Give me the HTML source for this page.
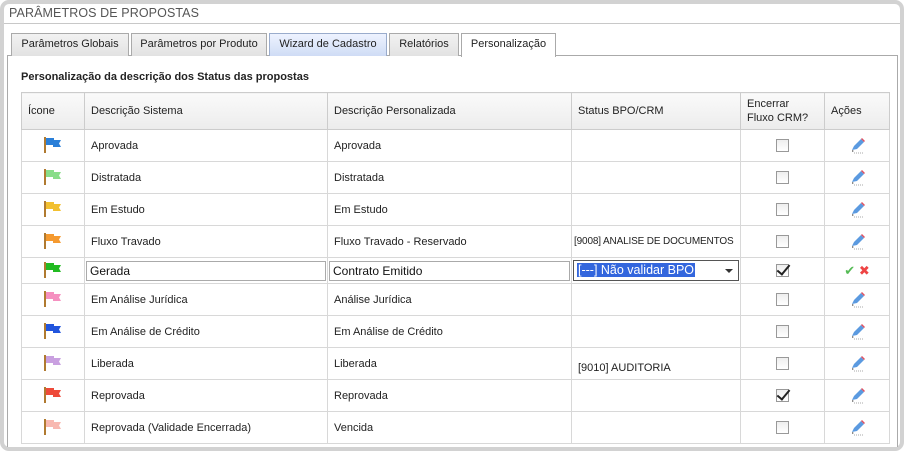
<!DOCTYPE html>
<html><head><meta charset="utf-8"><style>
*{box-sizing:border-box;margin:0;padding:0}
body{width:904px;height:451px;background:#fff;font-family:"Liberation Sans","DejaVu Sans",sans-serif;font-size:11px;color:#222;position:relative;overflow:hidden}
.frame{position:absolute;left:0;top:0;width:904px;height:451px;border:4px solid #d2d2d2;border-radius:9px;background:#fff}
.title{position:absolute;left:9px;top:6px;font-size:12.5px;color:#555;letter-spacing:.1px}
.tline{position:absolute;left:4px;right:4px;top:23px;border-top:1px solid #c8c8c8}
.tab{position:absolute;top:33px;height:23px;border:1px solid #aaa;border-bottom:none;background:linear-gradient(#f2f2f2,#e2e2e2);text-align:center;line-height:21px;color:#222}
.panel{position:absolute;left:7px;top:55px;width:891px;height:392px;border:1px solid #aaa;border-bottom:none;background:#fff}
.h{position:absolute;left:21px;top:71px;font-weight:bold;font-size:11px;color:#222}
table{position:absolute;left:21px;top:92px;border-collapse:collapse;width:869px;table-layout:fixed}
td,th{border:1px solid #d8d8d8;font-weight:normal;text-align:left;padding:0 6px;vertical-align:middle;white-space:nowrap;overflow:hidden}
th{background:linear-gradient(#fafafa,#ececec);height:37px;border-color:#ccc}
table{border:1px solid #999}
tr.r td{height:32px;padding-top:0}
tr.e td{height:26px;padding:0 1px}
.cb{display:block;margin:0 auto;width:13px;height:13px;border:1px solid #999;background:linear-gradient(#eee,#fff);position:relative}
.cb.on::after{content:"";position:absolute;left:3px;top:-3px;width:5px;height:11px;border:solid #222;border-width:0 2px 2px 0;transform:rotate(40deg)}
.ic{text-align:center;padding:0}
input.t{width:100%;height:20px;border:1px solid #aaa;font:12px "Liberation Sans",sans-serif;padding:0 3px;color:#111}
.sel{height:21px;border:1px solid #555;position:relative;font-size:12.5px;line-height:19px;padding-left:3px}
.sel span{background:#3366dd;color:#fff;padding:0 1px}
.sel i{position:absolute;right:5px;top:8px;border:4px solid transparent;border-top:4px solid #333;border-bottom:none}
svg{display:block;margin:0 auto}
</style></head><body>
<div class="frame"></div>
<div class="title">PARÂMETROS DE PROPOSTAS</div>
<div class="tline"></div>
<div class="panel"></div>
<div class="tab" style="left:11px;width:118px">Parâmetros Globais</div>
<div class="tab" style="left:131px;width:136px">Parâmetros por Produto</div>
<div class="tab" style="left:269px;width:118px;background:linear-gradient(#eef3ff,#cfdcf5);border-color:#9aaccc">Wizard de Cadastro</div>
<div class="tab" style="left:389px;width:70px">Relatórios</div>
<div class="tab" style="left:461px;width:95px;background:#fff;height:24px">Personalização</div>
<div class="h">Personalização da descrição dos Status das propostas</div>
<svg width="0" height="0" style="position:absolute"><defs>
<g id="fl"><rect x="0" y="0" width="2" height="16" fill="#b07a30"/><path d="M2 1h8v2h7l-2 3.5 2 3.5h-8v-2h-7z"/></g>
<g id="pen"><path d="M3 12l2-4 7-7 3 3-7 7z" fill="#5b9ae0"/><path d="M12 1l3 3 1-1-3-3z" fill="#e05060"/><path d="M3 12l2 1-2 1z" fill="#666"/><path d="M5 15h10" stroke="#aaa" stroke-dasharray="1 1"/></g>
</defs></svg>
<table>
<colgroup><col style="width:63px"><col style="width:243px"><col style="width:244px"><col style="width:169px"><col style="width:84px"><col></colgroup>
<tr><th>Ícone</th><th>Descrição Sistema</th><th>Descrição Personalizada</th><th>Status BPO/CRM</th><th style="line-height:14px">Encerrar<br>Fluxo CRM?</th><th>Ações</th></tr>
<tr class="r"><td class="ic"><svg width="18" height="17"><use href="#fl" fill="#2a7fd8"/></svg></td><td>Aprovada</td><td>Aprovada</td><td></td><td><span class="cb"></span></td><td class="ic"><svg width="16" height="16"><use href="#pen"/></svg></td></tr>
<tr class="r"><td class="ic"><svg width="18" height="17"><use href="#fl" fill="#88dd88"/></svg></td><td>Distratada</td><td>Distratada</td><td></td><td><span class="cb"></span></td><td class="ic"><svg width="16" height="16"><use href="#pen"/></svg></td></tr>
<tr class="r"><td class="ic"><svg width="18" height="17"><use href="#fl" fill="#f2c030"/></svg></td><td>Em Estudo</td><td>Em Estudo</td><td></td><td><span class="cb"></span></td><td class="ic"><svg width="16" height="16"><use href="#pen"/></svg></td></tr>
<tr class="r"><td class="ic"><svg width="18" height="17"><use href="#fl" fill="#f59a30"/></svg></td><td>Fluxo Travado</td><td>Fluxo Travado - Reservado</td><td style="padding:0 2px;font-size:10px;letter-spacing:-0.15px">[9008] ANALISE DE DOCUMENTOS</td><td><span class="cb"></span></td><td class="ic"><svg width="16" height="16"><use href="#pen"/></svg></td></tr>
<tr class="e"><td class="ic"><svg width="18" height="17"><use href="#fl" fill="#22bb22"/></svg></td><td><input class="t" value="Gerada"></td><td><input class="t" value="Contrato Emitido"></td><td><div class="sel"><span>[---] Não validar BPO</span><i></i></div></td><td><span class="cb on"></span></td><td class="ic" style="font-size:13px"><span style="color:#5b5">&#10004;</span> <span style="color:#e44">&#10006;</span></td></tr>
<tr class="r"><td class="ic"><svg width="18" height="17"><use href="#fl" fill="#f590c0"/></svg></td><td>Em Análise Jurídica</td><td>Análise Jurídica</td><td></td><td><span class="cb"></span></td><td class="ic"><svg width="16" height="16"><use href="#pen"/></svg></td></tr>
<tr class="r"><td class="ic"><svg width="18" height="17"><use href="#fl" fill="#2255dd"/></svg></td><td>Em Análise de Crédito</td><td>Em Análise de Crédito</td><td></td><td><span class="cb"></span></td><td class="ic"><svg width="16" height="16"><use href="#pen"/></svg></td></tr>
<tr class="r"><td class="ic"><svg width="18" height="17"><use href="#fl" fill="#c9a0e0"/></svg></td><td>Liberada</td><td>Liberada</td><td style="padding:8px 6px 0">[9010] AUDITORIA</td><td><span class="cb"></span></td><td class="ic"><svg width="16" height="16"><use href="#pen"/></svg></td></tr>
<tr class="r"><td class="ic"><svg width="18" height="17"><use href="#fl" fill="#ee4a3a"/></svg></td><td>Reprovada</td><td>Reprovada</td><td></td><td><span class="cb on"></span></td><td class="ic"><svg width="16" height="16"><use href="#pen"/></svg></td></tr>
<tr class="r"><td class="ic"><svg width="18" height="17"><use href="#fl" fill="#f8b8b0"/></svg></td><td>Reprovada (Validade Encerrada)</td><td>Vencida</td><td></td><td><span class="cb"></span></td><td class="ic"><svg width="16" height="16"><use href="#pen"/></svg></td></tr>
</table>
</body></html>
